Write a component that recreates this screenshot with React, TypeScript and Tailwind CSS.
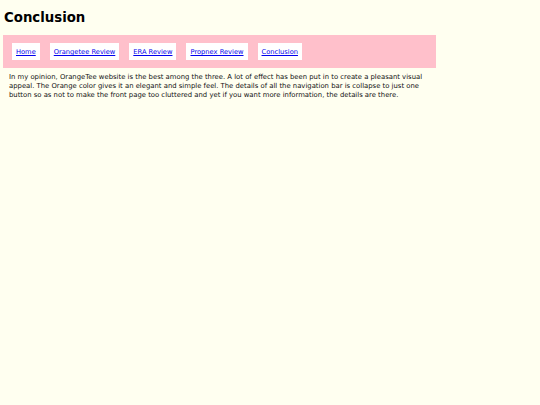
export default function App() {
  const links = ['Home', 'Orangetee Review', 'ERA Review', 'Propnex Review', 'Conclusion']
  return (
    <div className="min-h-[405px] bg-[#fffff0] text-black" style={{ fontFamily: '"DejaVu Sans", Verdana, sans-serif' }}>
      <h1 className="px-[4px] pt-[10px] pb-[9px] text-[13.3px] font-bold leading-[16px]">Conclusion</h1>
      <nav className="ml-[3px] w-[433px] bg-[#ffc0cb] px-[9px] py-[8px]">
        <ul className="flex gap-[10px]">
          {links.map(l => (
            <li key={l} className="bg-white px-[4px] pt-[1px] h-[17px] flex items-center">
              <a href="#" className="text-[6.7px] text-[#0000ee] underline">{l}</a>
            </li>
          ))}
        </ul>
      </nav>
      <p className="ml-[9px] mt-[5px] w-[423px] text-[6.85px] leading-[9px] text-[#111]">
        In my opinion, OrangeTee website is the best among the three. A lot of effect has been put in to create a pleasant visual appeal. The Orange color gives it an elegant and simple feel. The details of all the navigation bar is collapse to just one button so as not to make the front page too cluttered and yet if you want more information, the details are there.
      </p>
    </div>
  )
}
